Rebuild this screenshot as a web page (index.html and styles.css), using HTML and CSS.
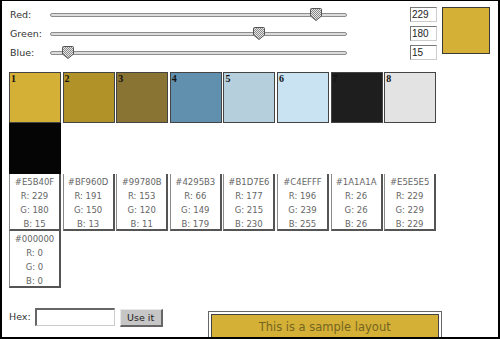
FILE: index.html
```html
<!DOCTYPE html>
<html>
<head lang="en">
    <meta charset="UTF-8">
    <title>Color picker</title>
    <link rel="stylesheet" href="styles.css">
</head>
<body>
<svg class="defs" width="0" height="0">
  <defs>
    <pattern id="hatch" width="2" height="2" patternUnits="userSpaceOnUse">
      <rect width="2" height="2" fill="#e6e6e6"/>
      <rect width="1" height="1" fill="#8a8a8a"/>
      <rect x="1" y="1" width="1" height="1" fill="#8a8a8a"/>
    </pattern>
  </defs>
</svg>
<div class="frame">
  <div class="controls">
    <div class="sliders">
      <div class="row">
        <span class="label">Red:</span>
        <div class="track">
          <svg class="thumb" style="left:89.8%" width="12" height="13" viewBox="0 0 12 13"><path d="M1.5 .5H10.5Q11.5 .5 11.5 1.5V8L6 12.5L.5 8V1.5Q.5 .5 1.5 .5Z" fill="url(#hatch)" stroke="#555"/></svg>
        </div>
      </div>
      <div class="row">
        <span class="label">Green:</span>
        <div class="track">
          <svg class="thumb" style="left:70.6%" width="12" height="13" viewBox="0 0 12 13"><path d="M1.5 .5H10.5Q11.5 .5 11.5 1.5V8L6 12.5L.5 8V1.5Q.5 .5 1.5 .5Z" fill="url(#hatch)" stroke="#555"/></svg>
        </div>
      </div>
      <div class="row">
        <span class="label">Blue:</span>
        <div class="track">
          <svg class="thumb" style="left:5.9%" width="12" height="13" viewBox="0 0 12 13"><path d="M1.5 .5H10.5Q11.5 .5 11.5 1.5V8L6 12.5L.5 8V1.5Q.5 .5 1.5 .5Z" fill="url(#hatch)" stroke="#555"/></svg>
        </div>
      </div>
    </div>
    <div class="values">
      <div class="row"><input class="num" type="text" value="229"></div>
      <div class="row"><input class="num" type="text" value="180"></div>
      <div class="row"><input class="num" type="text" value="15"></div>
    </div>
    <div class="preview"></div>
  </div>

  <div class="swatches">
    <div class="swatch c1">1</div>
    <div class="swatch c2">2</div>
    <div class="swatch c3">3</div>
    <div class="swatch c4">4</div>
    <div class="swatch c5">5</div>
    <div class="swatch c6">6</div>
    <div class="swatch c7">7</div>
    <div class="swatch c8">8</div>
    <div class="swatch c9"></div>
  </div>

  <div class="cards">
    <div class="card"><span>#E5B40F</span><span>R: 229</span><span>G: 180</span><span>B: 15</span></div>
    <div class="card"><span>#BF960D</span><span>R: 191</span><span>G: 150</span><span>B: 13</span></div>
    <div class="card"><span>#99780B</span><span>R: 153</span><span>G: 120</span><span>B: 11</span></div>
    <div class="card"><span>#4295B3</span><span>R: 66</span><span>G: 149</span><span>B: 179</span></div>
    <div class="card"><span>#B1D7E6</span><span>R: 177</span><span>G: 215</span><span>B: 230</span></div>
    <div class="card"><span>#C4EFFF</span><span>R: 196</span><span>G: 239</span><span>B: 255</span></div>
    <div class="card"><span>#1A1A1A</span><span>R: 26</span><span>G: 26</span><span>B: 26</span></div>
    <div class="card"><span>#E5E5E5</span><span>R: 229</span><span>G: 229</span><span>B: 229</span></div>
    <div class="card"><span>#000000</span><span>R: 0</span><span>G: 0</span><span>B: 0</span></div>
  </div>

  <div class="bottom">
    <span class="hex-label">Hex:</span>
    <input class="hex" type="text" value="">
    <button class="use">Use it</button>
    <div class="sample">
      <div class="sample-inner">This is a sample layout</div>
    </div>
  </div>
</div>
</body>
</html>
```

FILE: styles.css
```css
*{
    margin:0;
    padding:0;
    box-sizing:border-box;
}
body{
    background:#fff;
    font-family:"DejaVu Sans", Verdana, sans-serif;
}
.defs{
    position:absolute;
}
.frame{
    width:500px;
    height:339px;
    border:2px solid #000;
    border-top-width:1px;
    padding:4px 0 0 7px;
    overflow:hidden;
}
.controls{
    display:flex;
    align-items:flex-start;
}
.row{
    height:19px;
    display:flex;
    align-items:center;
}
.label{
    width:41px;
    padding-left:1px;
    font-size:9.5px;
    color:#333;
}
.track{
    position:relative;
    width:297px;
    height:4px;
    border:1px solid #8c8c8c;
    border-radius:2px;
    background:#dcdcdc;
}
.thumb{
    position:absolute;
    top:-6px;
    margin-left:-6px;
    display:block;
}
.values{
    margin-left:63px;
}
.num{
    width:27px;
    height:15px;
    border:1px solid #777;
    border-right-color:#ccc;
    border-bottom-color:#ccc;
    font-family:"Liberation Sans", Arial, sans-serif;
    font-size:10px;
    color:#222;
    padding-left:1px;
    outline:none;
}
.preview{
    margin:2px 0 0 5px;
    width:48px;
    height:47px;
    border:1px solid #3a3a3a;
    background:#d5b036;
}
.swatches{
    margin-top:10px;
    display:grid;
    grid-template-columns:repeat(8, 52px);
    column-gap:1.6px;
}
.swatch{
    height:51px;
    border:1px solid #444;
    font-family:"Liberation Serif", serif;
    font-weight:bold;
    font-size:10px;
    line-height:11px;
    padding-left:1px;
    color:#111;
}
.c1{ background:#d5b036; }
.c2{ background:#b09228; }
.c3{ background:#8a7434; }
.c4{ background:#6190ae; }
.c5{ background:#b6cfdd; }
.c6{ background:#c9e3f3; }
.c7{ background:#1e1e1e; }
.c8{ background:#e3e3e3; }
.c9{ background:#050505; border-color:#050505; }
.cards{
    display:grid;
    grid-template-columns:repeat(8, 52px);
    column-gap:1.6px;
}
.card{
    height:57px;
    border:1px solid #8a8a8a;
    border-top:0;
    border-right:2px solid #555;
    border-bottom:2px solid #555;
    display:flex;
    flex-direction:column;
    align-items:center;
    padding-top:1px;
    font-size:8.5px;
    line-height:14px;
    color:#666;
}
.bottom{
    margin-top:20px;
    display:flex;
    align-items:flex-start;
}
.hex-label{
    font-size:9.5px;
    color:#333;
    line-height:18px;
}
.hex{
    margin-left:4px;
    width:80px;
    height:18px;
    border:2px solid #666;
    border-right:1px solid #ccc;
    border-bottom:1px solid #ccc;
    outline:none;
}
.use{
    margin:1px 0 0 5px;
    width:43px;
    height:18px;
    background:#c6c6c6;
    border:1px solid #e8e8e8;
    border-right:2px solid #666;
    border-bottom:2px solid #666;
    font-family:"DejaVu Sans", Verdana, sans-serif;
    font-size:9.5px;
    color:#222;
}
.sample{
    margin:3px 0 0 45px;
    width:234px;
    height:40px;
    border:1px solid #666;
    padding:2px;
}
.sample-inner{
    height:100%;
    border:1px solid #444;
    background:#d4b037;
    text-align:center;
    padding-top:2px;
    font-size:11.5px;
    line-height:20px;
    color:#75651f;
}
```
